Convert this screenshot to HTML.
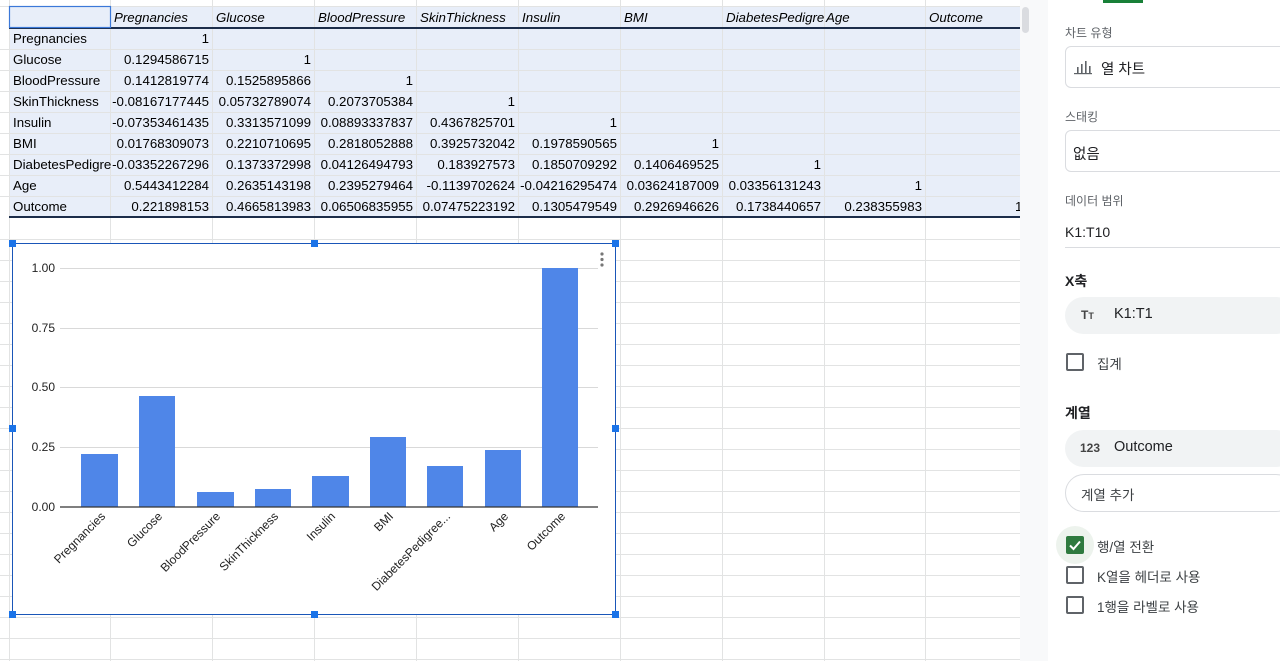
<!DOCTYPE html>
<html><head><meta charset="utf-8"><style>
*{margin:0;padding:0;box-sizing:border-box}
body{width:1280px;height:661px;overflow:hidden;background:#fff;position:relative;font-family:"Liberation Sans","Noto Sans CJK KR",sans-serif;color:#000}
.c{position:absolute;height:21px;line-height:21px;font-size:13.3px;white-space:nowrap;overflow:hidden;padding:0 4px}
.r{text-align:right;padding:0 3px}
.h{font-style:italic}
.p{position:absolute;font-size:13.5px;color:#3c4043;font-family:"Liberation Sans","Noto Sans CJK KR",sans-serif}
.lab{font-size:12px;color:#5f6368}
.box{position:absolute;border:1px solid #dadce0;border-radius:6px}
.pill{position:absolute;background:#f1f3f4;border-radius:20px}
.cb{position:absolute;width:18px;height:18px;border:2px solid #5f6368;border-radius:2px}
</style></head><body>
<svg width="1030" height="661" style="position:absolute;left:0;top:0">
<rect x="9" y="7" width="1011" height="211" fill="#e8eef9"/>
<g stroke="#e2e3e3" stroke-width="1">
<line x1="9.5" y1="0" x2="9.5" y2="661"/><line x1="110.5" y1="0" x2="110.5" y2="661"/><line x1="212.5" y1="0" x2="212.5" y2="661"/><line x1="314.5" y1="0" x2="314.5" y2="661"/><line x1="416.5" y1="0" x2="416.5" y2="661"/><line x1="518.5" y1="0" x2="518.5" y2="661"/><line x1="620.5" y1="0" x2="620.5" y2="661"/><line x1="722.5" y1="0" x2="722.5" y2="661"/><line x1="824.5" y1="0" x2="824.5" y2="661"/><line x1="925.5" y1="0" x2="925.5" y2="661"/>
<line x1="0" y1="6.5" x2="1020" y2="6.5"/>
<line x1="0" y1="49.5" x2="1020" y2="49.5"/><line x1="0" y1="70.5" x2="1020" y2="70.5"/><line x1="0" y1="91.5" x2="1020" y2="91.5"/><line x1="0" y1="112.5" x2="1020" y2="112.5"/><line x1="0" y1="133.5" x2="1020" y2="133.5"/><line x1="0" y1="154.5" x2="1020" y2="154.5"/><line x1="0" y1="175.5" x2="1020" y2="175.5"/><line x1="0" y1="196.5" x2="1020" y2="196.5"/>
<line x1="0" y1="239.5" x2="1020" y2="239.5"/><line x1="0" y1="260.5" x2="1020" y2="260.5"/><line x1="0" y1="281.5" x2="1020" y2="281.5"/><line x1="0" y1="302.5" x2="1020" y2="302.5"/><line x1="0" y1="323.5" x2="1020" y2="323.5"/><line x1="0" y1="344.5" x2="1020" y2="344.5"/><line x1="0" y1="365.5" x2="1020" y2="365.5"/><line x1="0" y1="386.5" x2="1020" y2="386.5"/><line x1="0" y1="407.5" x2="1020" y2="407.5"/><line x1="0" y1="428.5" x2="1020" y2="428.5"/><line x1="0" y1="449.5" x2="1020" y2="449.5"/><line x1="0" y1="470.5" x2="1020" y2="470.5"/><line x1="0" y1="491.5" x2="1020" y2="491.5"/><line x1="0" y1="512.5" x2="1020" y2="512.5"/><line x1="0" y1="533.5" x2="1020" y2="533.5"/><line x1="0" y1="554.5" x2="1020" y2="554.5"/><line x1="0" y1="575.5" x2="1020" y2="575.5"/><line x1="0" y1="596.5" x2="1020" y2="596.5"/><line x1="0" y1="617.5" x2="1020" y2="617.5"/><line x1="0" y1="638.5" x2="1020" y2="638.5"/><line x1="0" y1="659.5" x2="1020" y2="659.5"/>
</g>
<line x1="9" y1="28" x2="1020" y2="28" stroke="#1c2d4a" stroke-width="2"/>
<line x1="9" y1="217" x2="1020" y2="217" stroke="#1c2d4a" stroke-width="2"/>
<rect x="9.5" y="6.5" width="101" height="21" fill="none" stroke="#3b78d8" stroke-width="1.2"/>
<rect x="1020" y="0" width="10" height="661" fill="#f8f9fa"/>
<rect x="1022" y="7" width="7" height="26" rx="3.5" fill="#dadce0"/>
</svg>

<div class="c h" style="left:110px;top:7px;width:102px">Pregnancies</div>
<div class="c h" style="left:212px;top:7px;width:102px">Glucose</div>
<div class="c h" style="left:314px;top:7px;width:102px">BloodPressure</div>
<div class="c h" style="left:416px;top:7px;width:102px">SkinThickness</div>
<div class="c h" style="left:518px;top:7px;width:102px">Insulin</div>
<div class="c h" style="left:620px;top:7px;width:102px">BMI</div>
<div class="c h" style="left:722px;top:7px;width:102px">DiabetesPedigre</div>
<div class="c h" style="left:824px;top:7px;width:101px;padding-left:2px">Age</div>
<div class="c h" style="left:925px;top:7px;width:95px">Outcome</div>
<div class="c" style="left:9px;top:28px">Pregnancies</div>
<div class="c" style="left:9px;top:49px">Glucose</div>
<div class="c" style="left:9px;top:70px">BloodPressure</div>
<div class="c" style="left:9px;top:91px">SkinThickness</div>
<div class="c" style="left:9px;top:112px">Insulin</div>
<div class="c" style="left:9px;top:133px">BMI</div>
<div class="c" style="left:9px;top:154px;width:103px;padding-right:0">DiabetesPedigre</div>
<div class="c" style="left:9px;top:175px">Age</div>
<div class="c" style="left:9px;top:196px">Outcome</div>
<div class="c r" style="left:110px;top:28px;width:102px">1</div>
<div class="c r" style="left:110px;top:49px;width:102px">0.1294586715</div>
<div class="c r" style="left:110px;top:70px;width:102px">0.1412819774</div>
<div class="c r" style="left:106px;top:91px;width:106px">-0.08167177445</div>
<div class="c r" style="left:106px;top:112px;width:106px">-0.07353461435</div>
<div class="c r" style="left:110px;top:133px;width:102px">0.01768309073</div>
<div class="c r" style="left:106px;top:154px;width:106px">-0.03352267296</div>
<div class="c r" style="left:110px;top:175px;width:102px">0.5443412284</div>
<div class="c r" style="left:110px;top:196px;width:102px">0.221898153</div>
<div class="c r" style="left:212px;top:49px;width:102px">1</div>
<div class="c r" style="left:212px;top:70px;width:102px">0.1525895866</div>
<div class="c r" style="left:212px;top:91px;width:102px">0.05732789074</div>
<div class="c r" style="left:212px;top:112px;width:102px">0.3313571099</div>
<div class="c r" style="left:212px;top:133px;width:102px">0.2210710695</div>
<div class="c r" style="left:212px;top:154px;width:102px">0.1373372998</div>
<div class="c r" style="left:212px;top:175px;width:102px">0.2635143198</div>
<div class="c r" style="left:212px;top:196px;width:102px">0.4665813983</div>
<div class="c r" style="left:314px;top:70px;width:102px">1</div>
<div class="c r" style="left:314px;top:91px;width:102px">0.2073705384</div>
<div class="c r" style="left:314px;top:112px;width:102px">0.08893337837</div>
<div class="c r" style="left:314px;top:133px;width:102px">0.2818052888</div>
<div class="c r" style="left:314px;top:154px;width:102px">0.04126494793</div>
<div class="c r" style="left:314px;top:175px;width:102px">0.2395279464</div>
<div class="c r" style="left:314px;top:196px;width:102px">0.06506835955</div>
<div class="c r" style="left:416px;top:91px;width:102px">1</div>
<div class="c r" style="left:416px;top:112px;width:102px">0.4367825701</div>
<div class="c r" style="left:416px;top:133px;width:102px">0.3925732042</div>
<div class="c r" style="left:416px;top:154px;width:102px">0.183927573</div>
<div class="c r" style="left:414px;top:175px;width:104px">-0.1139702624</div>
<div class="c r" style="left:416px;top:196px;width:102px">0.07475223192</div>
<div class="c r" style="left:518px;top:112px;width:102px">1</div>
<div class="c r" style="left:518px;top:133px;width:102px">0.1978590565</div>
<div class="c r" style="left:518px;top:154px;width:102px">0.1850709292</div>
<div class="c r" style="left:514px;top:175px;width:106px">-0.04216295474</div>
<div class="c r" style="left:518px;top:196px;width:102px">0.1305479549</div>
<div class="c r" style="left:620px;top:133px;width:102px">1</div>
<div class="c r" style="left:620px;top:154px;width:102px">0.1406469525</div>
<div class="c r" style="left:620px;top:175px;width:102px">0.03624187009</div>
<div class="c r" style="left:620px;top:196px;width:102px">0.2926946626</div>
<div class="c r" style="left:722px;top:154px;width:102px">1</div>
<div class="c r" style="left:722px;top:175px;width:102px">0.03356131243</div>
<div class="c r" style="left:722px;top:196px;width:102px">0.1738440657</div>
<div class="c r" style="left:824px;top:175px;width:101px">1</div>
<div class="c r" style="left:824px;top:196px;width:101px">0.238355983</div>
<div class="c" style="left:1015px;top:196px;width:5px;padding:0">1</div>

<svg width="620" height="390" style="position:absolute;left:0;top:235px" font-family="Liberation Sans, sans-serif">
<rect x="12.5" y="8.5" width="603" height="371" fill="#fff" stroke="#1a56b8" stroke-width="1"/>
<g stroke="#d9d9d9" stroke-width="1">
<line x1="60" y1="33.5" x2="598" y2="33.5"/><line x1="60" y1="93.5" x2="598" y2="93.5"/><line x1="60" y1="152.5" x2="598" y2="152.5"/><line x1="60" y1="212.5" x2="598" y2="212.5"/>
</g>
<g font-size="12" fill="#222" text-anchor="end">
<text x="55" y="37">1.00</text><text x="55" y="97">0.75</text><text x="55" y="156">0.50</text><text x="55" y="216">0.25</text><text x="55" y="276">0.00</text>
</g>
<g fill="#4f86e8">
<rect x="81" y="219" width="37" height="53"/>
<rect x="139" y="161" width="36" height="111"/>
<rect x="197" y="257" width="37" height="15"/>
<rect x="255" y="254" width="36" height="18"/>
<rect x="312" y="241" width="37" height="31"/>
<rect x="370" y="202" width="36" height="70"/>
<rect x="427" y="231" width="36" height="41"/>
<rect x="485" y="215" width="36" height="57"/>
<rect x="542" y="33" width="36" height="239"/>
</g>
<line x1="60" y1="272" x2="598" y2="272" stroke="#333" stroke-width="1.2"/>
<g font-size="12" fill="#222" text-anchor="end">
<text transform="translate(106,282) rotate(-45)">Pregnancies</text>
<text transform="translate(163,282) rotate(-45)">Glucose</text>
<text transform="translate(221,282) rotate(-45)">BloodPressure</text>
<text transform="translate(279,282) rotate(-45)">SkinThickness</text>
<text transform="translate(336,282) rotate(-45)">Insulin</text>
<text transform="translate(394,282) rotate(-45)">BMI</text>
<text transform="translate(451,282) rotate(-45)">DiabetesPedigree...</text>
<text transform="translate(509,282) rotate(-45)">Age</text>
<text transform="translate(566,282) rotate(-45)">Outcome</text>
</g>
<g fill="#777"><circle cx="602" cy="19" r="1.6"/><circle cx="602" cy="24.5" r="1.6"/><circle cx="602" cy="30" r="1.6"/></g>
<g fill="#1a73e8">
<rect x="9" y="5" width="7" height="7"/><rect x="311" y="5" width="7" height="7"/><rect x="612" y="5" width="7" height="7"/>
<rect x="9" y="190" width="7" height="7"/><rect x="612" y="190" width="7" height="7"/>
<rect x="9" y="376" width="7" height="7"/><rect x="311" y="376" width="7" height="7"/><rect x="612" y="376" width="7" height="7"/>
</g>
</svg>

<div style="position:absolute;left:1030px;top:0;width:18px;height:661px;background:#f8f9fa"></div>
<div style="position:absolute;left:1103px;top:0;width:40px;height:3px;background:#188038"></div>
<div class="p lab" style="left:1065px;top:24px">차트 유형</div>
<div class="box" style="left:1065px;top:46px;width:230px;height:42px"></div>
<svg style="position:absolute;left:1074px;top:58px" width="20" height="18"><g fill="#5f6368"><rect x="0" y="15" width="18" height="1.2"/><rect x="3" y="9" width="1.6" height="6"/><rect x="7" y="6" width="1.6" height="9"/><rect x="11" y="3" width="1.6" height="12"/><rect x="15" y="8" width="1.6" height="7"/></g></svg>
<div class="p" style="left:1101px;top:58px;font-size:14.5px;color:#202124">열 차트</div>
<div class="p lab" style="left:1065px;top:108px">스태킹</div>
<div class="box" style="left:1065px;top:130px;width:230px;height:42px"></div>
<div class="p" style="left:1073px;top:143px;font-size:14.5px;color:#202124">없음</div>
<div class="p lab" style="left:1065px;top:192px">데이터 범위</div>
<div class="p" style="left:1065px;top:224px;font-size:14px;color:#202124">K1:T10</div>
<div style="position:absolute;left:1065px;top:247px;width:215px;height:1px;background:#dadce0"></div>
<div class="p" style="left:1065px;top:271px;font-size:14px;font-weight:bold;color:#202124">X축</div>
<div class="pill" style="left:1065px;top:297px;width:230px;height:37px"></div>
<div class="p" style="left:1081px;top:308px;font-size:12px;font-weight:bold;color:#444">T<span style="font-size:9px">T</span></div>
<div class="p" style="left:1114px;top:306px;font-size:14.5px;color:#202124">K1:T1</div>
<div class="cb" style="left:1066px;top:353px"></div>
<div class="p" style="left:1097px;top:353px">집계</div>
<div class="p" style="left:1065px;top:403px;font-size:14px;font-weight:bold;color:#202124">계열</div>
<div class="pill" style="left:1065px;top:430px;width:230px;height:37px"></div>
<div class="p" style="left:1080px;top:441px;font-size:12px;font-weight:bold;color:#444">123</div>
<div class="p" style="left:1114px;top:439px;font-size:14.5px;color:#202124">Outcome</div>
<div style="position:absolute;left:1065px;top:474px;width:230px;height:38px;border:1px solid #dadce0;border-radius:20px"></div>
<div class="p" style="left:1081px;top:484px">계열 추가</div>
<div style="position:absolute;left:1056px;top:526px;width:38px;height:38px;border-radius:50%;background:#edf3ed"></div>
<div style="position:absolute;left:1066px;top:536px;width:18px;height:18px;background:#2f7a3f;border-radius:2px"></div>
<svg style="position:absolute;left:1066px;top:536px" width="18" height="18"><path d="M4 9.5 L7.5 13 L14 5.5" stroke="#fff" stroke-width="2" fill="none"/></svg>
<div class="p" style="left:1097px;top:536px">행/열 전환</div>
<div class="cb" style="left:1066px;top:566px"></div>
<div class="p" style="left:1097px;top:566px">K열을 헤더로 사용</div>
<div class="cb" style="left:1066px;top:596px"></div>
<div class="p" style="left:1097px;top:596px">1행을 라벨로 사용</div>
</body></html>
